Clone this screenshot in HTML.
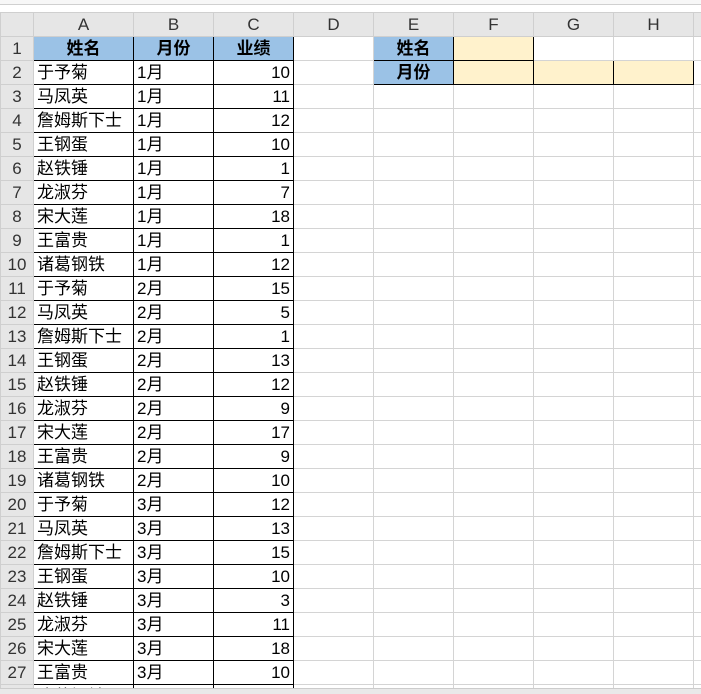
<!DOCTYPE html><html><head><meta charset="utf-8"><style>
html,body{margin:0;width:701px;height:694px;overflow:hidden}
body{background:#fff;position:relative;font-family:"Liberation Sans","Noto Sans CJK SC",sans-serif}
.top{position:absolute;left:0;top:0;width:701px;height:4px;background:#f7f7f7;border-bottom:1px solid #d0d0d0}
table{position:absolute;left:0;top:12px;border-collapse:collapse;table-layout:fixed;width:713px}
td{height:23px;padding:0 3px;border:1px solid #d4d4d4;font-size:17px;color:#000;white-space:nowrap;overflow:hidden;line-height:22px}
tr.h td{background:#e6e6e6;color:#333;text-align:center;font-size:17px;border-color:#cfcfcf}
td.r{background:#e6e6e6;color:#333;text-align:center;font-size:17px;border-color:#cfcfcf;padding:0}
.d{border:1px solid #000}
.hd{background:#9bc2e6;font-weight:bold;text-align:center;border:1px solid #000}
.n{text-align:right}
.y{background:#fff2cc;border:1px solid #000}
.bot{position:absolute;z-index:5;left:0;top:688px;width:701px;height:6px;background:#e9e9e9;border-top:1px solid #ccc}
</style></head><body>
<div class="top"></div>
<table>
<colgroup><col style="width:33px"><col style="width:100px"><col style="width:80px"><col style="width:80px"><col style="width:80px"><col style="width:80px"><col style="width:80px"><col style="width:80px"><col style="width:80px"><col style="width:20px"></colgroup>
<tr class="h"><td style="background:#e6e6e6"></td><td>A</td><td>B</td><td>C</td><td>D</td><td>E</td><td>F</td><td>G</td><td>H</td><td></td></tr>
<tr><td class="r">1</td><td class="hd">姓名</td><td class="hd">月份</td><td class="hd">业绩</td><td></td><td class="hd">姓名</td><td class="y"></td><td></td><td></td><td></td></tr>
<tr><td class="r">2</td><td class="d">于予菊</td><td class="d">1月</td><td class="d n">10</td><td></td><td class="hd">月份</td><td class="y"></td><td class="y"></td><td class="y"></td><td></td></tr>
<tr><td class="r">3</td><td class="d">马凤英</td><td class="d">1月</td><td class="d n">11</td><td></td><td></td><td></td><td></td><td></td><td></td></tr>
<tr><td class="r">4</td><td class="d">詹姆斯下士</td><td class="d">1月</td><td class="d n">12</td><td></td><td></td><td></td><td></td><td></td><td></td></tr>
<tr><td class="r">5</td><td class="d">王钢蛋</td><td class="d">1月</td><td class="d n">10</td><td></td><td></td><td></td><td></td><td></td><td></td></tr>
<tr><td class="r">6</td><td class="d">赵铁锤</td><td class="d">1月</td><td class="d n">1</td><td></td><td></td><td></td><td></td><td></td><td></td></tr>
<tr><td class="r">7</td><td class="d">龙淑芬</td><td class="d">1月</td><td class="d n">7</td><td></td><td></td><td></td><td></td><td></td><td></td></tr>
<tr><td class="r">8</td><td class="d">宋大莲</td><td class="d">1月</td><td class="d n">18</td><td></td><td></td><td></td><td></td><td></td><td></td></tr>
<tr><td class="r">9</td><td class="d">王富贵</td><td class="d">1月</td><td class="d n">1</td><td></td><td></td><td></td><td></td><td></td><td></td></tr>
<tr><td class="r">10</td><td class="d">诸葛钢铁</td><td class="d">1月</td><td class="d n">12</td><td></td><td></td><td></td><td></td><td></td><td></td></tr>
<tr><td class="r">11</td><td class="d">于予菊</td><td class="d">2月</td><td class="d n">15</td><td></td><td></td><td></td><td></td><td></td><td></td></tr>
<tr><td class="r">12</td><td class="d">马凤英</td><td class="d">2月</td><td class="d n">5</td><td></td><td></td><td></td><td></td><td></td><td></td></tr>
<tr><td class="r">13</td><td class="d">詹姆斯下士</td><td class="d">2月</td><td class="d n">1</td><td></td><td></td><td></td><td></td><td></td><td></td></tr>
<tr><td class="r">14</td><td class="d">王钢蛋</td><td class="d">2月</td><td class="d n">13</td><td></td><td></td><td></td><td></td><td></td><td></td></tr>
<tr><td class="r">15</td><td class="d">赵铁锤</td><td class="d">2月</td><td class="d n">12</td><td></td><td></td><td></td><td></td><td></td><td></td></tr>
<tr><td class="r">16</td><td class="d">龙淑芬</td><td class="d">2月</td><td class="d n">9</td><td></td><td></td><td></td><td></td><td></td><td></td></tr>
<tr><td class="r">17</td><td class="d">宋大莲</td><td class="d">2月</td><td class="d n">17</td><td></td><td></td><td></td><td></td><td></td><td></td></tr>
<tr><td class="r">18</td><td class="d">王富贵</td><td class="d">2月</td><td class="d n">9</td><td></td><td></td><td></td><td></td><td></td><td></td></tr>
<tr><td class="r">19</td><td class="d">诸葛钢铁</td><td class="d">2月</td><td class="d n">10</td><td></td><td></td><td></td><td></td><td></td><td></td></tr>
<tr><td class="r">20</td><td class="d">于予菊</td><td class="d">3月</td><td class="d n">12</td><td></td><td></td><td></td><td></td><td></td><td></td></tr>
<tr><td class="r">21</td><td class="d">马凤英</td><td class="d">3月</td><td class="d n">13</td><td></td><td></td><td></td><td></td><td></td><td></td></tr>
<tr><td class="r">22</td><td class="d">詹姆斯下士</td><td class="d">3月</td><td class="d n">15</td><td></td><td></td><td></td><td></td><td></td><td></td></tr>
<tr><td class="r">23</td><td class="d">王钢蛋</td><td class="d">3月</td><td class="d n">10</td><td></td><td></td><td></td><td></td><td></td><td></td></tr>
<tr><td class="r">24</td><td class="d">赵铁锤</td><td class="d">3月</td><td class="d n">3</td><td></td><td></td><td></td><td></td><td></td><td></td></tr>
<tr><td class="r">25</td><td class="d">龙淑芬</td><td class="d">3月</td><td class="d n">11</td><td></td><td></td><td></td><td></td><td></td><td></td></tr>
<tr><td class="r">26</td><td class="d">宋大莲</td><td class="d">3月</td><td class="d n">18</td><td></td><td></td><td></td><td></td><td></td><td></td></tr>
<tr><td class="r">27</td><td class="d">王富贵</td><td class="d">3月</td><td class="d n">10</td><td></td><td></td><td></td><td></td><td></td><td></td></tr>
<tr><td class="r">28</td><td class="d">诸葛钢铁</td><td class="d">3月</td><td class="d n">15</td><td></td><td></td><td></td><td></td><td></td><td></td></tr>
</table>
<div class="bot"></div>
</body></html>
